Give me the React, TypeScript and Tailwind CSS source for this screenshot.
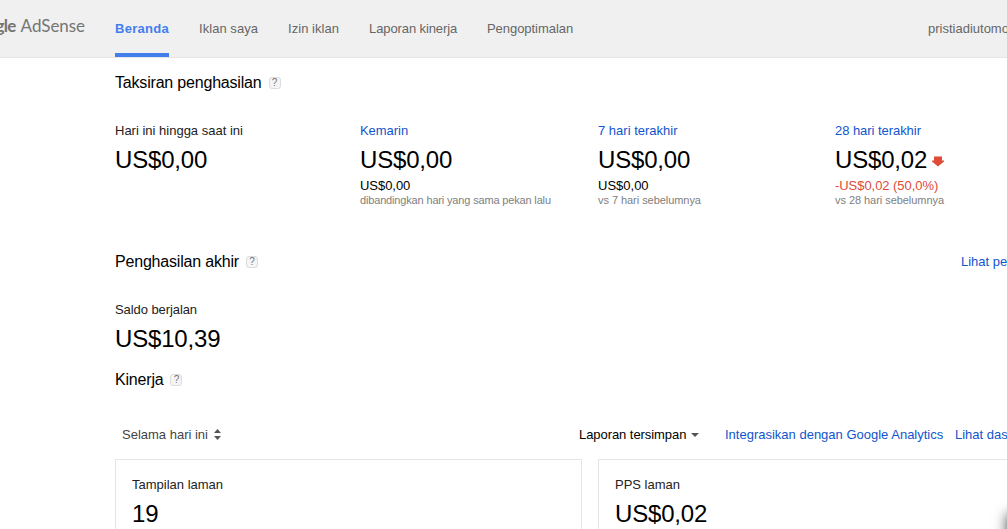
import React from 'react';

const navItems = [
  { label: 'Iklan saya', className: 'ml-[29px] w-[60px] tracking-[0.05px]' },
  { label: 'Izin iklan', className: 'ml-[29px] w-[52px] tracking-[0.05px]' },
  { label: 'Laporan kinerja', className: 'ml-[29px] w-[89px] tracking-[-0.1px]' },
  { label: 'Pengoptimalan', className: 'ml-[29px] w-[87px] tracking-[-0.05px]' },
];

const earnings = [
  { label: 'Hari ini hingga saat ini', amount: 'US$0,00', width: 'w-[245px]' },
  {
    label: 'Kemarin',
    amount: 'US$0,00',
    change: 'US$0,00',
    note: 'dibandingkan hari yang sama pekan lalu',
    link: true,
    width: 'w-[238px] tracking-[-0.05px]',
    noteClass: 'tracking-[-0.16px]',
  },
  {
    label: '7 hari terakhir',
    amount: 'US$0,00',
    change: 'US$0,00',
    note: 'vs 7 hari sebelumnya',
    link: true,
    width: 'w-[237px]',
    noteClass: 'tracking-[-0.05px]',
  },
  {
    label: '28 hari terakhir',
    amount: 'US$0,02',
    change: '-US$0,02 (50,0%)',
    note: 'vs 28 hari sebelumnya',
    link: true,
    down: true,
    width: 'w-[172px] tracking-[-0.05px]',
    noteClass: 'tracking-[-0.05px]',
  },
];

const metrics = [
  { label: 'Tampilan laman', amount: '19' },
  { label: 'PPS laman', amount: 'US$0,02' },
];

function HelpBadge() {
  return (
    <span className="ml-[7px] flex h-3 w-3 items-center justify-center rounded-[3px] border border-[#dcdcdc] bg-[#f5f5f5] text-[10px] leading-none text-[#777]">
      ?
    </span>
  );
}

function SectionTitle({ children }: { children: React.ReactNode }) {
  return (
    <div className="flex h-[18px] items-center">
      <h2 className="text-base leading-[18px] tracking-[-0.19px] text-black">{children}</h2>
      <HelpBadge />
    </div>
  );
}

function Amount({ children }: { children: React.ReactNode }) {
  return <div className="text-2xl leading-7 tracking-[-0.18px] text-black">{children}</div>;
}

function DownArrow() {
  return (
    <svg className="ml-[5px] mt-[3px] h-[11px] w-3" viewBox="0 0 12 11">
      <path d="M2 0.500h8v4h2v1L6 10.500 0 5.500v-1h2z" fill="#dd4b39" />
    </svg>
  );
}

export default function App() {
  return (
    <div className="relative flex h-[529px] w-[1007px] flex-col overflow-hidden whitespace-nowrap bg-white font-['Liberation_Sans',Arial,sans-serif] text-[13px] leading-4 text-[#222]">
      <header className="flex h-[58px] shrink-0 border-b border-[#e5e5e5] bg-[#f0f0f0] text-[#666]">
        <div className="flex w-[115px] shrink-0 justify-end pr-[30px] pt-4 font-['Lato',sans-serif] text-[17px] leading-5 text-[#757575]">
          <span className="mr-[5px] font-bold tracking-[-0.7px]">Google</span>
          <span className="tracking-[-0.05px]">AdSense</span>
        </div>
        <nav className="flex pt-[21px]">
          <a className="mr-px h-9 w-[54px] border-b-4 border-[#427fed] font-bold tracking-[0.3px] text-[#427fed]">Beranda</a>
          {navItems.map((item) => (
            <a key={item.label} className={item.className}>
              {item.label}
            </a>
          ))}
        </nav>
        <div className="ml-auto w-[79px] shrink-0 pt-[21px]">pristiadiutomo</div>
      </header>

      <main className="pl-[115px] pt-4">
        <SectionTitle>Taksiran penghasilan</SectionTitle>
        <div className="mt-[31px] flex h-[86px]">
          {earnings.map((item) => (
            <div key={item.label} className={`shrink-0 ${item.width}`}>
              <div className={item.link ? 'text-[#1155cc]' : ''}>{item.label}</div>
              <div className="mt-[7px] flex items-center">
                <Amount>{item.amount}</Amount>
                {item.down && <DownArrow />}
              </div>
              {item.change && (
                <div className={item.down ? 'mt-1 text-[#dd4b39]' : 'mt-1 text-black'}>{item.change}</div>
              )}
              {item.note && (
                <div className={`-mt-px text-[11px] leading-[14px] text-[#808080] ${item.noteClass}`}>{item.note}</div>
              )}
            </div>
          ))}
        </div>

        <div className="mt-[44px] flex">
          <SectionTitle>Penghasilan akhir</SectionTitle>
          <a className="ml-auto w-[46px] pt-px text-[#1155cc]">Lihat pembayaran</a>
        </div>
        <div className="mt-[31px] tracking-[-0.08px]">Saldo berjalan</div>
        <div className="mt-[7px]">
          <Amount>US$10,39</Amount>
        </div>

        <div className="mt-[18px]">
          <SectionTitle>Kinerja</SectionTitle>
        </div>
        <div className="mt-[38px] flex">
          <div className="ml-[7px] flex items-center text-[#444]">
            Selama hari ini
            <svg className="mb-0.5 ml-[6px] h-[11px] w-[7px]" viewBox="0 0 7 11" fill="#555">
              <path d="M0 4 3.500 0 7 4zM0 7h7l-3.500 4z" />
            </svg>
          </div>
          <div className="ml-auto flex w-[146px] items-center tracking-[-0.06px] text-black">
            Laporan tersimpan
            <svg className="ml-[5px] h-1 w-2" viewBox="0 0 8 4" fill="#555">
              <path d="M0 0h8L4 4z" />
            </svg>
          </div>
          <a className="w-[230px] text-[#1155cc]">Integrasikan dengan Google Analytics</a>
          <a className="w-[52px] text-[#1155cc]">Lihat dasbor lengkap</a>
        </div>
        <div className="mt-4 flex gap-4">
          {metrics.map((metric) => (
            <div key={metric.label} className="h-[120px] w-[467px] shrink-0 border border-[#e5e5e5] pl-4 pt-[17px]">
              <div>{metric.label}</div>
              <div className="mt-[7px]">
                <Amount>{metric.amount}</Amount>
              </div>
            </div>
          ))}
        </div>
      </main>

      <div className="absolute left-[1008px] top-[515px] h-10 w-10 shadow-[0_0_12px_1px_rgba(0,0,0,0.7)]" />
    </div>
  );
}
